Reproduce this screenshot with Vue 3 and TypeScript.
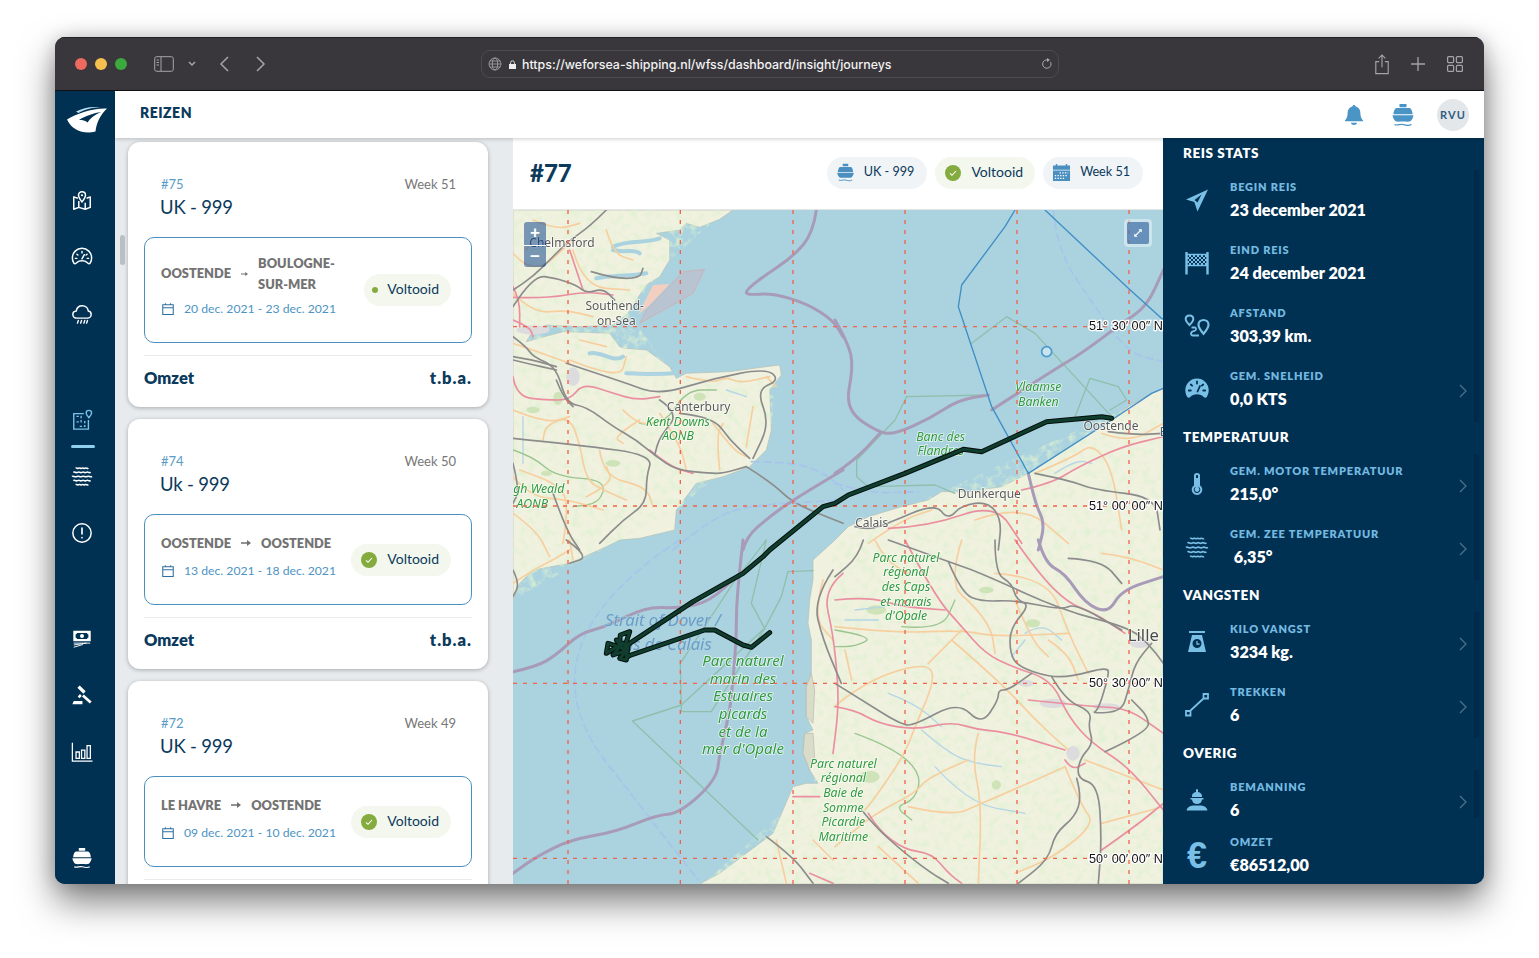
<script setup lang="ts">
interface Trip { id: string; week: string; ship: string; from: string; to: string; dates: string; dot?: boolean }
interface Row { label: string; value: string; icon: string; chev: boolean; short?: boolean }
interface Group { title?: string; rows: Row[]; cls?: string }

const trips: Trip[] = [
  { id: '#75', week: 'Week 51', ship: 'UK - 999', from: 'OOSTENDE', to: 'BOULOGNE-SUR-MER', dates: '20 dec. 2021 - 23 dec. 2021', dot: true },
  { id: '#74', week: 'Week 50', ship: 'Uk - 999', from: 'OOSTENDE', to: 'OOSTENDE', dates: '13 dec. 2021 - 18 dec. 2021' },
  { id: '#72', week: 'Week 49', ship: 'UK - 999', from: 'LE HAVRE', to: 'OOSTENDE', dates: '09 dec. 2021 - 10 dec. 2021' },
]

const groups: Group[] = [
  { title: 'REIS STATS', rows: [
    { label: 'BEGIN REIS', value: '23 december 2021', icon: 'plane', chev: false },
    { label: 'EIND REIS', value: '24 december 2021', icon: 'flag', chev: false },
    { label: 'AFSTAND', value: '303,39 km.', icon: 'route', chev: false },
    { label: 'GEM. SNELHEID', value: '0,0 KTS', icon: 'gaugefill', chev: true },
  ] },
  { title: 'TEMPERATUUR', rows: [
    { label: 'GEM. MOTOR TEMPERATUUR', value: '215,0°', icon: 'thermo', chev: true },
    { label: 'GEM. ZEE TEMPERATUUR', value: '\u00a06,35°', icon: 'waves', chev: true },
  ] },
  { title: 'VANGSTEN', rows: [
    { label: 'KILO VANGST', value: '3234 kg.', icon: 'scale', chev: true },
    { label: 'TREKKEN', value: '6', icon: 'line', chev: true },
  ] },
  { title: 'OVERIG', cls: 'last', rows: [
    { label: 'BEMANNING', value: '6', icon: 'worker', chev: true, short: true },
  ] },
]

const navGroups: { icon: string; active?: boolean }[][] = [
  [{ icon: 'mapfold' }, { icon: 'gauge' }, { icon: 'cloud' }],
  [{ icon: 'area', active: true }, { icon: 'waves' }, { icon: 'alert' }],
  [{ icon: 'money' }, { icon: 'gavel' }, { icon: 'chart' }],
  [{ icon: 'ship' }],
]

function smooth(s: string): string {
  const p = s.trim().split(/\s+/).map((q) => q.split(',').map(Number))
  let d = `M${p[0][0]} ${p[0][1]}`
  for (let i = 1; i < p.length - 1; i++) {
    const mx = (p[i][0] + p[i + 1][0]) / 2
    const my = (p[i][1] + p[i + 1][1]) / 2
    d += `Q${p[i][0]} ${p[i][1]} ${mx} ${my}`
  }
  const l = p[p.length - 1]
  return d + `L${l[0]} ${l[1]}`
}

const gridX = [165, 502, 840, 1176, 1512, 1848]
const gridY = [350, 888, 1420, 1945]
const coords = [
  { t: '51° 30′ 00″ N', y: 348 }, { t: '51° 00′ 00″ N', y: 888 },
  { t: '50° 30′ 00″ N', y: 1419 }, { t: '50° 00′ 00″ N', y: 1947 },
]

// quadrant offsets follow the crops of the map (3x map pixels)
const Q7 = (s: string) => s.trim().split(/\s+/).map((q) => { const [x, y] = q.split(','); return `${+x},${+y + 990}` }).join(' ')
const Q8 = (s: string) => s.trim().split(/\s+/).map((q) => { const [x, y] = q.split(','); return `${+x + 966},${+y}` }).join(' ')
const Q9 = (s: string) => s.trim().split(/\s+/).map((q) => { const [x, y] = q.split(','); return `${+x + 966},${+y + 990}` }).join(' ')

const orange = [
  '0,600 100,640 170,620 200,700 220,810 270,840 340,870', '170,620 100,640 90,690', '380,630 300,680 330,700',
  '520,500 600,520 640,500 680,520 770,500', '600,640 660,720 700,740', '700,710 720,590', '260,720 270,800 400,830 420,890',
  '620,780 610,680 630,640', '0,800 50,860 170,870 270,900', '150,1000 170,880 130,820 20,780', '0,130 60,200 180,90',
  '200,390 280,410', '170,450 320,510 340,440', '220,860 300,820 280,770', '0,400 60,420 170,460', '180,120 210,230 350,240',
  '0,250 60,310 160,300 240,320', '440,610 500,700 520,780', '760,500 790,530',
  '280,60 300,130 360,150', '60,30 130,60 200,40', '40,120 70,70', '330,600 370,640 420,640', '0,910 70,960 110,1040',
  Q7('0,130 60,90 120,60 170,30'), Q7('170,0 180,60'),
  Q9('0,260 180,280 380,270 480,290 700,280'), Q9('30,330 50,420'), Q9('0,500 30,470 150,400 280,370 300,420 240,560 210,640 130,760 90,810'),
  Q9('380,270 280,370'), Q9('400,660 280,710 240,760 120,820 0,920'), Q9('430,580 410,650 440,790 430,1030'), Q9('440,790 580,730 690,680'),
  Q9('220,800 350,830 440,790'), Q9('750,660 985,750'), Q9('800,850 985,800'), Q9('690,680 740,800 780,850 660,950 540,1000'),
  Q9('350,300 500,430 600,540 700,630'), Q9('480,100 640,110 700,280 760,400'), Q9('130,920 250,1030'), Q9('380,0 340,130 420,200 470,270 480,340'),
  Q9('800,40 880,50 985,90'), Q9('540,180 590,300 640,350'), Q9('640,300 700,340 730,420'), Q9('120,0 150,60 220,100'),
  Q8('600,790 720,740 770,700 830,770 860,960'), Q8('420,930 560,880 700,1000'), Q8('100,1000 200,930 290,900'), Q8('800,670 880,700 985,640'),
  Q7('930,120 900,230 960,300'), Q7('790,900 820,1030'), Q7('900,900 960,960'),
]
const pink = [
  '0,230 20,270 20,350', '0,262 100,265 220,245 300,255', '170,120 190,180 210,240', '0,500 10,560 100,570 170,570 210,520 300,550 370,570 440,560',
  '410,720 470,770 540,790', '0,330 50,350 60,380',
  Q9('0,180 100,170 200,200 330,210'), Q9('210,0 300,170 380,260 450,340 530,380 650,420 700,530 770,610 880,680 985,810'),
  Q9('0,500 60,510 130,550 240,570 350,545 430,570 510,575 690,630'), Q9('580,480 680,490 780,500 880,505 985,580'),
  Q9('690,660 710,690 750,670'), Q9('800,930 900,860 985,790'), Q9('100,820 130,870 210,930 290,940 340,1000 380,1030'),
  Q9('540,0 610,100 700,190 780,220 870,280'),
  Q8('160,955 280,950 480,880 560,1000'), Q8('560,840 650,820 730,770 860,710 985,680'),
  Q7('990,100 930,150 960,280 975,430 975,520 960,640'), Q7('840,770 920,770'), Q7('890,1000 960,1030'),
]
const rivers = [
  Q9('260,570 340,640 420,670 500,680'), Q9('60,210 150,200'), Q9('300,680 400,790 570,820'), Q9('570,280 620,250 680,300'), Q9('30,240 130,240'),
  Q9('160,460 240,490 320,560'), Q9('530,350 570,300'), '30,620 30,760', '350,490 450,495', '640,540 700,560', Q8('660,790 720,750 770,760'),
]
const rails = [
  '280,0 230,50 170,90 120,140 60,200 0,240', '0,290 60,195 130,205 190,225 220,250 270,235 305,270', '235,185 300,205 380,205 390,175',
  '0,380 40,410 60,440 130,470 160,580 220,590 300,650 370,690 430,740 490,780 590,790 630,790 700,770',
  '0,685 200,705 420,735 400,800 400,880 330,930 260,1000', '130,510 150,560 180,590', '160,460 250,490 340,520 440,555 600,505 760,475 800,510 730,540 770,640 720,745',
  '440,570 500,610 440,680 425,735', '500,610 600,620 650,690 710,745', '700,770 780,820 840,880 990,940', '0,440 60,450 130,470', '0,450 40,460 130,480', '0,760 20,840 0,880',
  '120,850 160,960 200,1020', Q7('160,0 230,50 170,70'), Q7('0,90 20,130 0,170'),
  Q9('160,0 340,65 440,100 680,210 880,262 940,310 985,370'), Q9('340,65 380,160 440,185 540,180 680,210 720,190 860,270'),
  Q9('480,0 480,100 530,130 545,180 585,195 525,265 525,340 550,380 640,410 710,410 820,380 820,410 790,510 770,520 860,515 880,450 900,370 950,310'),
  Q9('0,430 80,480 200,555 240,555 370,485 440,555 490,480 490,450 520,450 590,400'),
  Q9('650,410 690,480 770,515 760,560 775,610 735,655 725,715 790,735 800,900 790,1030'), Q9('725,715 740,770 720,830 660,880 640,960 550,1030'),
  Q9('810,635 940,575 940,530 890,480'), Q9('85,0 70,50 0,110'), Q9('80,810 120,860 210,940 290,1000 340,1030'), Q9('700,55 800,60 860,130'),
  Q8('60,950 100,960 160,940 300,880 340,930 380,885 460,875 500,930 490,1020'), Q8('600,790 700,810 780,840 960,860 975,960'), Q8('820,665 900,675 985,670'),
  Q7('960,90 900,180 930,300 985,430'), Q7('760,890 840,950 900,1030'),
]
const greens = [
  Q9('0,270 120,290 60,320 0,320'), Q9('60,580 170,620 260,700 240,780 180,800 230,840'), '0,720 60,740 130,800 280,810 260,880 180,890', '380,640 450,650 520,540 610,540',
  Q9('200,260 320,270 360,180'),
]
const purples = [
  '910,0 900,70 840,140 750,200 700,240 700,255 780,250 880,280 960,330 990,380',
  Q8('0,330 40,400 55,470 30,600 135,670 185,670 285,625 370,570 460,555'), Q8('470,600 640,490 740,430 860,340 935,290 985,180'),
  '690,1020 700,980 770,920 840,870 990,780', Q8('0,790 60,750 135,670'),
  Q7('690,0 680,90 670,200 670,300 655,480 640,560 620,640 610,720 500,820 430,825 310,875 170,900 70,950 0,1000'),
  Q7('0,395 70,380 130,345 200,280 280,260 400,200 500,205 590,185 680,100'),
  Q8('580,790 600,880 630,940 610,1020'), Q9('610,0 630,70 690,100 750,190 820,220 860,150 985,110'),
]
const blueThin = [
  Q8('540,0 510,50 380,225 370,290 470,590 580,790'), Q8('630,0 880,235 985,330'), Q8('580,790 830,630 950,550 985,535'),
]
const seaGreen = [
  Q8('410,400 515,320 600,370 830,620'), Q8('720,620 765,505 850,530 875,570 825,600'), Q8('460,555 215,560 180,630 65,750 65,800 100,830 300,825 360,850'),
  Q7('760,0 715,190 755,265 595,515 505,515 502,370 660,130 760,0'), Q7('825,95 900,92'), Q7('825,95 805,170 755,265 505,495 358,543 735,900'),
]
const blueDash = [
  '715,755 850,755 950,800 990,840', '480,1020 600,920 720,885 990,870', Q7('500,0 10,320 555,1020'),
  Q8('655,0 665,120 780,290 880,430 985,455'), Q8('0,820 100,850 250,845'),
]
const forest = [
  [60, 600, 20, 10], [135, 565, 14, 20], [560, 560, 18, 12], [300, 760, 22, 10], [100, 790, 16, 8],
  [1090, 1200, 30, 14], [1420, 1140, 22, 10], [1560, 1240, 22, 12], [1070, 1700, 30, 18], [1450, 1725, 14, 14],
]
const urban = [[1680, 1630, 20, 22], [1540, 1420, 24, 10], [1620, 1480, 40, 14], [1780, 1490, 40, 10], [1880, 1300, 30, 14], [180, 500, 20, 28], [60, 360, 50, 14]]
const track1 = Q8('830,625 800,620 635,635 440,725 385,718 210,790 40,855 0,880') + ' 930,890 770,1020 ' + Q7('750,50 690,100 540,185 350,310')
const track2 = Q7('340,350 575,270 605,270 690,315 715,322 770,278')
const cluster = Q7('350,310 330,335 350,275 322,285 318,320 285,310 280,340 330,310 300,345 345,330 320,355 340,360 345,320 310,300 345,350')
</script>

<template>
  <div class="stage">
    <svg class="defs" width="0" height="0" aria-hidden="true">
      <defs>
        <pattern id="chk" width="4" height="4" patternUnits="userSpaceOnUse">
          <rect width="2" height="2" fill="#79bfe6" /><rect x="2" y="2" width="2" height="2" fill="#79bfe6" />
        </pattern>
        <filter id="mott" x="0" y="0" width="100%" height="100%">
          <feTurbulence type="fractalNoise" baseFrequency="0.045" numOctaves="3" seed="7" />
          <feColorMatrix values="0 0 0 0 .74  0 0 0 0 .88  0 0 0 0 .64  2.2 0 0 0 -.95" />
          <feComposite in2="SourceAlpha" operator="in" />
        </filter>
        <clipPath id="mapclip"><rect width="1950" height="2022" /></clipPath>
      </defs>
      <symbol id="ship" viewBox="0 0 24 24">
        <path fill="currentColor" d="M8.500 1h7v3.200h-7zM5.500 5h13c1.500 0 2.700 2.300 3.200 6.300H2.300C2.800 7.300 4 5 5.500 5zM1.500 12.300h21c-.4 2.500-1.500 4.500-3 6-2 .8-4.500.3-7.500.3s-5.500.5-7.500-.3c-1.500-1.500-2.600-3.500-3-6z" />
        <path fill="none" stroke="currentColor" stroke-width="1.200" d="M3.500 21.500c3 1.600 5.500-.8 8.500 0s5.500 1.600 8.500 0" />
      </symbol>
      <symbol id="mapfold" viewBox="0 0 24 24">
        <path fill="none" stroke="currentColor" stroke-width="1.600" stroke-linejoin="round" d="M7.500 9 3 7.500V21l5.500-2 7 2 5.500-2V7.500L17 9M8.500 12v7M15.500 14v7" />
        <path fill="none" stroke="currentColor" stroke-width="1.600" d="M12 2c2.300 0 3.800 1.700 3.800 3.700 0 2.300-3.800 7.300-3.800 7.300S8.200 8 8.200 5.700C8.200 3.700 9.700 2 12 2z" />
        <circle cx="12" cy="5.700" r="1.200" fill="currentColor" />
      </symbol>
      <symbol id="gauge" viewBox="0 0 24 24">
        <path fill="none" stroke="currentColor" stroke-width="1.600" stroke-linejoin="round" d="M12 2.500a10.500 10.500 0 0 1 10.500 10.500c0 2-.5 3.800-1.500 5.500-1.200 1.500-2.500.5-3.500-.5-1.200-1.200-3.500-1.800-5.500-1.800s-4.300.6-5.500 1.800c-1 1-2.300 2-3.500.5-1-1.700-1.500-3.500-1.500-5.500A10.500 10.500 0 0 1 12 2.500z" />
        <path stroke="currentColor" stroke-width="1.600" stroke-linecap="round" d="M12 6v1.500M6.500 9l1 .8M4.800 13.500h1.500M17.500 9l-1 .8M19.200 13.500h-1.500M14.500 9.500 12 14" />
      </symbol>
      <symbol id="gaugefill" viewBox="0 0 24 24">
        <path fill="currentColor" d="M12 1.500a11.700 11.700 0 0 1 11.700 11.700c0 2.500-.7 4.800-2 6.800-.8 1-2.200.8-3-.1-1.600-1.800-4-2.700-6.700-2.700s-5.100.9-6.700 2.700c-.8.900-2.200 1.100-3 .1-1.300-2-2-4.300-2-6.800A11.700 11.700 0 0 1 12 1.500z" />
        <path stroke="#003153" stroke-width="1.800" stroke-linecap="round" d="M12 4.500v2M5.800 7.500l1.300 1.200M3.800 13.500h2M18.200 7.500l-1.300 1.200M20.200 13.500h-2M15 9l-2.500 5.500" />
      </symbol>
      <symbol id="cloud" viewBox="0 0 24 24">
        <path fill="none" stroke="currentColor" stroke-width="1.600" stroke-linejoin="round" d="M6.500 16.500c-2.500 0-4.500-1.700-4.500-3.900 0-2.100 1.700-3.600 3.700-3.800C6.300 5.300 9 3 12.300 3c3.700 0 6.300 2.700 6.500 5.800 1.900.3 3.200 1.800 3.200 3.700 0 2.200-1.800 4-4 4z" />
        <path stroke="currentColor" stroke-width="1.500" stroke-linecap="round" d="m8 19-1 3M11.500 19l-1 3M15 19l-1 3M18 19l-1 3" />
      </symbol>
      <symbol id="area" viewBox="0 0 24 24">
        <path fill="none" stroke="currentColor" stroke-width="1.500" d="M14 5H3v17h16V12" />
        <path fill="none" stroke="currentColor" stroke-width="1.500" stroke-dasharray="2.500 2" d="M6 8h5v6H6M15 13v6H9" />
        <path fill="none" stroke="currentColor" stroke-width="1.500" d="M19.500 1.500c1.700 0 3 1.300 3 2.900 0 1.800-3 5.100-3 5.100s-3-3.300-3-5.100c0-1.600 1.300-2.900 3-2.900z" />
      </symbol>
      <symbol id="waves" viewBox="0 0 24 24">
        <path fill="none" stroke="currentColor" stroke-width="1.700" d="M5 3.500c1.500-1 2.200 1 3.500 0s2.200 1 3.500 0 2.200 1 3.500 0 2.200 1 3.500 0M2.500 8c1.700-1.300 2.300 1.300 4.800 0s2.300 1.300 4.700 0 2.300 1.300 4.700 0 2.300 1.300 4.800 0M1 12.500c1.700-1.300 2.800 1.300 5.500 0s2.800 1.300 5.500 0 2.800 1.300 5.500 0 2.800 1.300 5.500 0M2.500 17c1.700-1.300 2.300 1.300 4.800 0s2.300 1.300 4.700 0 2.300 1.300 4.700 0 2.300 1.300 4.800 0M5 21.500c1.500-1 2.200 1 3.500 0s2.200 1 3.500 0 2.200 1 3.500 0 2.200 1 3.500 0" />
      </symbol>
      <symbol id="alert" viewBox="0 0 24 24">
        <circle cx="12" cy="12" r="10" fill="none" stroke="currentColor" stroke-width="1.600" />
        <path stroke="currentColor" stroke-width="1.800" stroke-linecap="round" d="M12 6.500V13M12 17v.3" />
      </symbol>
      <symbol id="money" viewBox="0 0 24 24">
        <path fill="currentColor" fill-rule="evenodd" d="M2.500 3h19v11.500h-19zM6.500 5.500c0 1-.8 1.500-1.500 1.500v3.500c.7 0 1.500.5 1.500 1.500h11c0-1 .8-1.500 1.500-1.500V7c-.7 0-1.500-.5-1.500-1.500z" />
        <circle cx="12" cy="8.800" r="2.200" fill="currentColor" />
        <path stroke="currentColor" stroke-width="1" d="M3 16.500h18M3 18.500 17 16.500M3 21 13 18" />
      </symbol>
      <symbol id="gavel" viewBox="0 0 24 24">
        <path fill="currentColor" d="M9.500 1.500 16 8l-2.500 2.500L7 4zM9.800 11l2 2-2.500 2.500-2-2zM14 11.500l8.500 7.500-2 2.200-8.500-7.700zM3 18.500h9.500V22H1.500z" />
      </symbol>
      <symbol id="chart" viewBox="0 0 24 24">
        <path fill="none" stroke="currentColor" stroke-width="1.400" d="M1.500 2v20h22M5.500 12h3.600v7H5.500zM11.500 10h3.600v9h-3.600zM17.500 5h3.600v14h-3.600z" />
      </symbol>
      <symbol id="plane" viewBox="0 0 24 24">
        <path fill="currentColor" fill-rule="evenodd" d="M23 1.500 1 11.500l8.300 2.500 3.200 9.500zM9.500 12l7-5.500-4 8z" />
      </symbol>
      <symbol id="flag" viewBox="0 0 24 24">
        <path stroke="#79bfe6" stroke-width="2.400" d="M1.500 1v22.500M22.500 1v22.500" />
        <path stroke="#79bfe6" stroke-width="1.700" d="M2 3.500h20M2 14.500h20" />
        <rect x="2" y="4" width="20" height="10" fill="url(#chk)" />
      </symbol>
      <symbol id="route" viewBox="0 0 26 24">
        <path fill="none" stroke="currentColor" stroke-width="2" d="M5.500 1.500c2.200 0 3.800 1.500 3.800 3.500 0 2.300-3.800 6-3.800 6S1.700 7.300 1.700 5c0-2 1.600-3.500 3.800-3.500z" />
        <path fill="none" stroke="currentColor" stroke-width="2.200" d="M19.500 6c3 0 5 2 5 4.800 0 3.200-5 9-5 9s-5-5.800-5-9C14.500 8 16.500 6 19.500 6z" />
        <path fill="none" stroke="currentColor" stroke-width="1.800" d="M7.500 13.500h3.300c1.700 0 1.700 3-.3 3.300-2 .3-3.500 1-3.500 2.800 0 1 .5 1.900 2 1.900h6" />
      </symbol>
      <symbol id="thermo" viewBox="0 0 24 24">
        <path fill="none" stroke="currentColor" stroke-width="2" d="M10 3.500c0-1 .9-1.500 2-1.500s2 .5 2 1.500v10.300a4.300 4.300 0 1 1-4 0z" />
        <path stroke="currentColor" stroke-width="2.600" d="M12 6v10" />
        <circle cx="12" cy="17.500" r="2.400" fill="currentColor" />
      </symbol>
      <symbol id="scale" viewBox="0 0 24 24">
        <path fill="currentColor" fill-rule="evenodd" d="M4 1h16v2H4zM7 5h10l4 17H3zM12 9a4.500 4.500 0 1 0 0 9 4.500 4.500 0 0 0 0-9z" />
        <path stroke="currentColor" stroke-width="1.300" d="M12 11v3h2.500" />
      </symbol>
      <symbol id="line" viewBox="0 0 24 24">
        <path fill="none" stroke="currentColor" stroke-width="1.800" d="M1 18h4.500v4.500H1zM18.500 1H23v4.500h-4.500zM5 18 18.500 5.500" />
      </symbol>
      <symbol id="worker" viewBox="0 0 24 24">
        <path fill="currentColor" d="M12 1l1 .5V4c2.500.5 4 2 4 4v1H7V8c0-2 1.500-3.500 4-4V1.500zM5.500 10h13v1.500H17c-.3 3-2.200 4.500-5 4.500s-4.700-1.500-5-4.500H5.500zM8 17.500h8c3.500.3 6 1.800 6.500 5H1.500c.5-3.200 3-4.700 6.500-5z" />
      </symbol>
      <symbol id="cal" viewBox="0 0 16 16">
        <path fill="none" stroke="currentColor" stroke-width="1.200" d="M2 3.200h12v11H2zM2 6.500h12M5 1.500v2M11 1.500v2" />
      </symbol>
      <symbol id="calfill" viewBox="0 0 20 20">
        <path fill="currentColor" d="M1 2.500h3V1h1.500v1.500h9V1H16v1.500h3V7H1zM1 8h18v11H1z" />
        <path stroke="#fff" stroke-width="1.300" stroke-dasharray="1.400 1.400" d="M8 10.500h9M3 13.300h14M3 16.200h10" />
      </symbol>
      <symbol id="check" viewBox="0 0 16 16">
        <circle cx="8" cy="8" r="8" fill="#84ab3e" />
        <path fill="none" stroke="#fff" stroke-width="1.100" d="m5 8.300 2 2 4-4.300" />
      </symbol>
    </svg>

    <div class="window">
      <header class="chrome">
        <div class="lights"><i class="r"></i><i class="y"></i><i class="g"></i></div>
        <svg class="tb side" viewBox="0 0 20 16"><rect x=".7" y=".7" width="18.600" height="14.600" rx="2" fill="none" stroke="currentColor" /><path stroke="currentColor" d="M7 1v14M2.500 4h2.500M2.500 6.500h2.500M2.500 9h2.500" /></svg>
        <svg class="tb drop" viewBox="0 0 8 6"><path fill="none" stroke="currentColor" stroke-width="1.500" d="m1 1 3 3 3-3" /></svg>
        <svg class="tb back" viewBox="0 0 10 16"><path fill="none" stroke="currentColor" stroke-width="1.500" d="M9 1 2 8l7 7" /></svg>
        <svg class="tb fwd" viewBox="0 0 10 16"><path fill="none" stroke="currentColor" stroke-width="1.500" d="m1 1 7 7-7 7" /></svg>
        <div class="url">
          <svg class="globe" viewBox="0 0 14 14"><g fill="none" stroke="currentColor" stroke-width=".8"><circle cx="7" cy="7" r="6" /><ellipse cx="7" cy="7" rx="2.700" ry="6" /><path d="M1 7h12M2 4h10M2 10h10" /></g></svg>
          <svg class="lock" viewBox="0 0 8 10"><path fill="currentColor" d="M0 4.500h8V10H0z" /><path fill="none" stroke="currentColor" d="M1.800 4.500V3a2.200 2.200 0 0 1 4.400 0v1.500" /></svg>
          <span class="addr">https://weforsea-shipping.nl/wfss/dashboard/insight/journeys</span>
          <svg class="reload" viewBox="0 0 12 12"><path fill="none" stroke="currentColor" d="M9.500 4a4.200 4.200 0 1 1-2.500-2" /><path fill="currentColor" d="M6 0v4l3-2z" /></svg>
        </div>
        <svg class="tb share" viewBox="0 0 16 22"><path fill="none" stroke="currentColor" stroke-width="1.200" d="M5 8H1.500v12.500h13V8H11M8 14V1M4.500 4.500 8 1l3.500 3.500" /></svg>
        <svg class="tb plus" viewBox="0 0 14 14"><path stroke="currentColor" stroke-width="1.300" d="M7 0v14M0 7h14" /></svg>
        <svg class="tb tabs" viewBox="0 0 16 16"><g fill="none" stroke="currentColor" stroke-width="1.200"><rect x=".6" y=".6" width="6" height="6" rx="1" /><rect x="9.400" y=".6" width="6" height="6" rx="1" /><rect x=".6" y="9.400" width="6" height="6" rx="1" /><rect x="9.400" y="9.400" width="6" height="6" rx="1" /></g></svg>
      </header>

      <div class="app">
        <nav class="nav">
          <div class="logo">
            <svg viewBox="0 0 40 28" width="40" height="28">
              <path fill="#fff" d="M0 14.500C9 9 25 3 40 3.500 33 10 29.500 18 28.500 26.500 18 29.500 5 26 0 14.500z" />
              <path fill="#003153" d="M12 15C18 11 27 8 34 7 27.500 10 23 13 20.500 17.500 18.500 15.500 15.500 15 12 15z" />
              <path fill="#bfe0f0" d="M9 6.500C16 3 25 1 33 2.500 25 2.500 17 4.500 11.500 8z" />
            </svg>
          </div>
          <div v-for="(g, gi) in navGroups" :key="gi" class="nav-group">
            <div v-for="it in g" :key="it.icon" class="nav-item" :class="{ active: it.active }">
              <svg class="nav-ic"><use :href="'#' + it.icon" /></svg>
            </div>
          </div>
        </nav>

        <div class="main">
          <div class="topbar">
            <h1>REIZEN</h1>
            <svg class="top-ic" viewBox="0 0 22 24"><path fill="currentColor" d="M11 1c1 0 1.700.7 1.800 1.700C16 3.500 18 6 18 9.500c0 4 1 6.500 3 8.500v1H1v-1c2-2 3-4.500 3-8.500 0-3.500 2-6 5.200-6.800C9.300 1.700 10 1 11 1zM7.500 20.500h7c-.6 1.600-2 2.500-3.500 2.500s-2.900-.9-3.500-2.500z" /></svg>
            <svg class="top-ic ship"><use href="#ship" /></svg>
            <div class="avatar">RVU</div>
          </div>
          <div class="content">
            <section class="list">
              <div class="thumb"></div>
              <article v-for="t in trips" :key="t.id" class="card">
                <div class="card-top"><span class="num">{{ t.id }}</span><span class="week">{{ t.week }}</span></div>
                <div class="title">{{ t.ship }}</div>
                <div class="route-box">
                  <div class="route-left">
                    <div class="route">
                      <span class="port">{{ t.from }}</span>
                      <svg class="arrow" viewBox="0 0 10 8"><path fill="currentColor" d="M0 3.200h6V1l4 3-4 3V4.800H0z" /></svg>
                      <span class="port to">{{ t.to }}</span>
                    </div>
                    <div class="dates"><svg class="cal"><use href="#cal" /></svg><span>{{ t.dates }}</span></div>
                  </div>
                  <div class="badge" :class="{ dotted: t.dot }">
                    <i v-if="t.dot" class="dot"></i>
                    <svg v-else class="chk"><use href="#check" /></svg>
                    <span>Voltooid</span>
                  </div>
                </div>
                <div class="card-foot"><b>Omzet</b><b class="tba">t.b.a.</b></div>
              </article>
            </section>

            <section class="center">
              <div class="map-head">
                <h2>#77</h2>
                <div class="chips">
                  <div class="chip"><svg class="chip-ic"><use href="#ship" /></svg><span>UK - 999</span></div>
                  <div class="chip ok"><svg class="chip-ic small"><use href="#check" /></svg><span>Voltooid</span></div>
                  <div class="chip"><svg class="chip-ic"><use href="#calfill" /></svg><span>Week 51</span></div>
                </div>
              </div>
              <div class="map">
                <svg class="map-svg" viewBox="0 0 1950 2022" preserveAspectRatio="none">
                  <g clip-path="url(#mapclip)">
                    <rect width="1950" height="2022" fill="#aad3df" />
                    <path class="land" d="M0 0H660L620 28 560 52 520 40 500 60 430 70 470 90 470 150 440 200 400 225 370 270 345 310 300 345 200 350 100 345 60 360 40 395 150 365 290 370 320 410 335 415 400 420 470 470 490 505 520 490 650 485 760 470 800 465 805 495 770 540 775 660 760 720 710 770 630 800 550 820 490 900 485 960 380 985 320 990 280 1010 170 1060 60 1080 20 1120 0 1170Z" />
                    <path class="land" d="M1950 535 1916 550 1846 590 1796 630 1686 700 1546 790 1466 830 1366 845 1286 845 1246 870 1166 890 1066 920 1006 950 966 990 900 1050 900 1110 890 1170 885 1240 895 1290 895 1390 880 1430 880 1520 900 1560 875 1570 870 1630 890 1680 915 1720 880 1720 840 1730 780 1870 700 1930 620 1990 560 2022H1950Z" />
                    <g filter="url(#mott)"><path d="M0 0H640L470 150 345 310 490 505 790 490 775 660 490 900 320 990 0 1170Z M1950 545 966 990 895 1430 905 1720 570 2022H1950Z" /></g>
                    <ellipse v-for="(f, i) in forest" :key="'f' + i" :cx="f[0]" :cy="f[1]" :rx="f[2]" :ry="f[3]" fill="#cfe3b8" />
                    <ellipse v-for="(f, i) in urban" :key="'u' + i" :cx="f[0]" :cy="f[1]" :rx="f[2]" :ry="f[3]" fill="#dcdcdf" />
                    <path class="inlet" d="M300 110C340 90 400 100 440 85M250 205C300 195 350 200 400 190M230 430C260 420 300 460 330 440M340 490C380 490 420 495 480 490M300 120C340 130 360 115 380 130" />
                    <path d="M575 178 510 185 400 300 380 340 470 290 540 250z" fill="#c2b8c4" fill-opacity=".55" stroke="#d7a8a8" stroke-width="2" />
                    <path d="M470 222 420 225 375 315 410 285z" fill="#f2cfc0" />
                    <path d="M895 1390 880 1430 880 1520 900 1540 905 1440z M875 1570 870 1630 890 1680 905 1640 900 1570z" fill="#d8dcc8" stroke="#b8b8b0" stroke-width="2" />

                    <path v-for="(r, i) in rivers" :key="'ri' + i" :d="smooth(r)" class="ln" stroke="#b4d6e6" stroke-width="4" />
                    <path v-for="(r, i) in greens" :key="'g' + i" :d="smooth(r)" class="ln" stroke="#9ac58e" stroke-width="4" />
                    <path v-for="(r, i) in orange" :key="'o' + i" :d="smooth(r)" class="ln" stroke="#f7cf9e" stroke-width="5" />
                    <path v-for="(r, i) in pink" :key="'p' + i" :d="smooth(r)" class="ln" stroke="#ea8f9f" stroke-width="5" />
                    <path v-for="(r, i) in rails" :key="'r' + i" :d="smooth(r)" class="ln" stroke="#8c8c8c" stroke-width="5" />
                    <path v-for="(r, i) in seaGreen" :key="'sg' + i" :d="'M' + r.replace(/ /g, 'L')" class="ln" stroke="#8fbfac" stroke-width="4" />
                    <path v-for="(r, i) in blueDash" :key="'bd' + i" :d="smooth(r)" class="ln" stroke="#a7c4ea" stroke-width="5" stroke-dasharray="22 14" />
                    <path v-for="(r, i) in purples" :key="'pu' + i" :d="smooth(r)" class="ln" stroke="#a79bb8" stroke-width="9" />
                    <path v-for="(r, i) in blueThin" :key="'bt' + i" :d="'M' + r.replace(/ /g, 'L')" class="ln" stroke="#3f8ec6" stroke-width="4" />
                    <circle cx="1601" cy="425" r="15" fill="#c9e4ee" stroke="#4a9ad0" stroke-width="5" />

                    <g class="lbl grey">
                      <text x="147" y="110">Chelmsford</text><text x="305" y="300">Southend-</text><text x="310" y="346">on-Sea</text>
                      <text x="557" y="602">Canterbury</text><text x="1794" y="660">Oostende</text><text x="1429" y="865">Dunkerque</text>
                      <text x="1076" y="952">Calais</text><text x="1891" y="1292" class="big">Lille</text>
                      <text x="1952" y="677">B</text>
                    </g>
                    <g class="lbl park">
                      <text x="495" y="648">Kent Downs</text><text x="495" y="691">AONB</text><text x="60" y="849">High Weald</text><text x="58" y="893">AONB</text>
                      <text x="1576" y="544">Vlaamse</text><text x="1576" y="587">Banken</text><text x="1283" y="692">Banc des</text><text x="1283" y="734">Flandres</text>
                      <text x="1179" y="1056">Parc naturel</text><text x="1179" y="1099">régional</text><text x="1179" y="1144">des Caps</text><text x="1179" y="1188">et marais</text><text x="1179" y="1231">d'Opale</text>
                      <text x="991" y="1673">Parc naturel</text><text x="991" y="1717">régional</text><text x="991" y="1761">Baie de</text><text x="991" y="1805">Somme</text><text x="991" y="1849">Picardie</text><text x="991" y="1893">Maritime</text>
                    </g>
                    <g class="lbl park wide">
                      <text x="690" y="1367">Parc naturel</text><text x="690" y="1421">marin des</text><text x="690" y="1474">Estuaires</text><text x="690" y="1527">picards</text><text x="690" y="1580">et de la</text><text x="690" y="1632">mer d'Opale</text>
                    </g>
                    <g class="lbl strait"><text x="450" y="1249">Strait of Dover /</text><text x="450" y="1319">Pas de Calais</text></g>

                    <line v-for="x in gridX" :key="'gx' + x" :x1="x" :x2="x" y1="0" y2="2022" class="grat" />
                    <line v-for="y in gridY" :key="'gy' + y" :y1="y" :y2="y" x1="0" x2="1950" class="grat" />
                    <text v-for="c in coords" :key="c.y" x="1728" :y="c.y + 12" class="coord">{{ c.t }}</text>

                    <g class="trk-o">
                      <polyline :points="track1" /><polyline :points="track2" /><polyline :points="cluster" />
                    </g>
                    <g class="trk-i">
                      <polyline :points="track1" /><polyline :points="track2" /><polyline :points="cluster" />
                    </g>
                  </g>
                </svg>
                <div class="zoomer"><button>+</button><button>−</button></div>
                <div class="expand"><button><svg viewBox="0 0 12 12" width="10" height="10"><path stroke="#fff" stroke-width="1.500" d="M2.500 9.500l7-7" /><path fill="#fff" d="M6.500 1.500h4v4zM1.500 6.500v4h4z" /></svg></button></div>
              </div>
            </section>

            <aside class="stats">
              <div v-for="g in groups" :key="g.title" class="stat-group" :class="g.cls">
                <h3>{{ g.title }}</h3>
                <div class="rows">
                  <div v-for="r in g.rows" :key="r.label" class="row" :class="{ short: r.short }">
                    <svg class="row-ic"><use :href="'#' + r.icon" /></svg>
                    <div class="row-text"><div class="row-label">{{ r.label }}</div><div class="row-val">{{ r.value }}</div></div>
                    <svg v-if="r.chev" class="chev" viewBox="0 0 8 14"><path fill="none" stroke="currentColor" stroke-width="1.300" d="m1 1 6 6-6 6" /></svg>
                  </div>
                </div>
              </div>
              <div class="row">
                <span class="euro">€</span>
                <div class="row-text"><div class="row-label">OMZET</div><div class="row-val">€86512,00</div></div>
              </div>
            </aside>
          </div>
        </div>
      </div>
    </div>
  </div>
</template>

<style>
html, body { margin: 0; background: #fff; }
</style>

<style scoped>
* { box-sizing: border-box; }
.stage { width: 1539px; height: 958px; padding: 37px 55px 74px; overflow: hidden; font-family: Lato, "Noto Sans", sans-serif; }
.defs { position: absolute; }
.window { height: 847px; border-radius: 10px; overflow: hidden; display: flex; flex-direction: column; box-shadow: 0 18px 36px rgba(0,0,0,.5), 0 0 18px rgba(0,0,0,.18); background: #003153; }

.chrome { height: 54px; flex: none; background: #39373c; color: #a5a4a7; display: flex; align-items: center; border-bottom: 1px solid #111; border-top: 1px solid #222; }
.lights { display: flex; gap: 8px; margin-left: 20px; }
.lights i { width: 12px; height: 12px; border-radius: 50%; display: block; }
.lights .r { background: #ed6a5e; } .lights .y { background: #f5bf4f; } .lights .g { background: #3ba93b; }
.tb { flex: none; }
.side { width: 20px; height: 16px; margin-left: 27px; }
.drop { width: 8px; height: 6px; margin-left: 14px; }
.back { width: 10px; height: 16px; margin-left: 23px; }
.fwd { width: 10px; height: 16px; margin-left: 27px; }
.url { width: 578px; height: 28px; margin-left: 215px; border: 1px solid #4e4c51; border-radius: 9px; display: flex; align-items: center; padding: 0 5px 0 6px; color: #aaa; }
.globe { width: 14px; height: 14px; margin-right: 6px; }
.lock { width: 7px; height: 9px; margin-left: 1px; color: #eee; }
.addr { margin-left: 6px; font: 500 12.4px Inter, sans-serif; color: #f2f2f2; flex: 1; white-space: nowrap; }
.reload { width: 12px; height: 12px; }
.share { width: 16px; height: 21px; margin-left: 315px; }
.plus { width: 14px; height: 14px; margin-left: 21px; }
.tabs { width: 16px; height: 16px; margin-left: 22px; }

.app { flex: 1; display: flex; min-height: 0; }
.nav { width: 60px; flex: none; background: #003153; color: #fff; display: flex; flex-direction: column; overflow: hidden; }
.logo { height: 82px; flex: none; display: flex; justify-content: flex-start; padding: 14px 0 0 12px; }
.nav-group { flex: none; margin-bottom: 50px; }
.nav-item { height: 56.3px; display: flex; align-items: center; justify-content: center; position: relative; padding-right: 6px; }
.nav-ic { width: 22px; height: 22px; }
.nav-item.active { color: #78c4e8; }
.nav-item.active::after { content: ""; position: absolute; left: 16px; width: 24px; height: 3px; bottom: 0; background: #8fd0ee; border-radius: 2px; }

.main { flex: 1; min-width: 0; display: flex; flex-direction: column; }
.topbar { height: 47px; flex: none; background: #fff; display: flex; align-items: center; padding: 0 15px 0 25px; box-shadow: 0 1px 4px rgba(0,0,0,.2); position: relative; z-index: 3; color: #4a94c6; }
.topbar h1 { margin: 0 auto 4px 0; font-size: 14px; font-weight: 800; letter-spacing: .5px; color: #0b3a5c; }
.top-ic { width: 20px; height: 22px; margin-right: 27px; }
.top-ic.ship { width: 24px; height: 24px; margin-right: 22px; }
.avatar { width: 32px; height: 32px; border-radius: 50%; background: #e3e7ea; color: #2d5d80; font-size: 11px; font-weight: 700; letter-spacing: 1.2px; display: flex; align-items: center; justify-content: center; }

.content { flex: 1; min-height: 0; display: flex; }
.list { width: 398px; flex: none; background: #e7ebee; padding: 4px 25px 0 13px; overflow: hidden; position: relative; }
.thumb { position: absolute; left: 5px; top: 97px; width: 5px; height: 30px; background: #b9bfc4; border-radius: 3px; }
.card { background: #fff; border-radius: 12px; box-shadow: 0 1px 4px rgba(0,0,0,.28); margin-bottom: 12px; padding: 33px 16px 0; height: 250px; }
.card:first-of-type { height: 265px; }
.card-top { display: flex; justify-content: space-between; padding: 0 16px 0 17px; font-size: 13px; line-height: 18px; }
.num { color: #5b9cc7; }
.week { color: #777; }
.title { padding-left: 16px; font-size: 18.5px; letter-spacing: -.2px; line-height: 24px; margin-top: 2px; color: #0b3a5c; }
.route-box { margin-top: 18px; border: 1px solid #4b90c0; border-radius: 10px; display: flex; align-items: center; padding: 0 20px 0 16px; height: 91px; }
.card:first-of-type .route-box { height: 106px; }
.route-left { flex: 1; min-width: 0; padding-bottom: 6px; }
.card:first-of-type .route-left { padding-bottom: 9px; }
.route { display: flex; align-items: center; }
.port { font-size: 12.8px; font-weight: 800; line-height: 21px; color: #737373; }
.to { width: min-content; flex: none; max-width: 120px; }
.arrow { width: 10px; height: 8px; margin: 0 10px; color: #707070; flex: none; }
.card:first-of-type .arrow { width: 7px; height: 6px; }
.dates { display: flex; align-items: center; font-size: 12.2px; color: #4d94c4; margin-top: 7px; line-height: 20px; white-space: nowrap; }
.card:first-of-type .dates { margin-top: 4px; }
.cal { width: 14px; height: 14px; color: #2e6f9f; margin-right: 9px; flex: none; }
.badge { flex: none; height: 32px; border-radius: 16px; background: #f3f7ee; display: flex; align-items: center; padding: 0 12px 3px 10px; font-size: 14px; color: #0b3a5c; }
.badge.dotted { padding-left: 8px; padding-bottom: 4px; }
.chk { width: 16px; height: 16px; margin-right: 10px; margin-top: 3px; }
.dot { width: 6px; height: 6px; border-radius: 50%; background: #84ab3e; margin: 3px 9px 0 0; }
.card-foot { margin-top: 12px; border-top: 1px solid #e8eaec; padding-top: 11px; display: flex; justify-content: space-between; font-size: 16.5px; line-height: 22px; color: #0b3a5c; }
.card-foot b { font-weight: 800; }
.tba { letter-spacing: 1px; }

.center { width: 650px; flex: none; display: flex; flex-direction: column; background: #fff; }
.map-head { height: 72px; flex: none; display: flex; align-items: center; justify-content: space-between; padding: 0 20px 2px 17px; border-bottom: 1px solid #e4e6e8; }
.map-head h2 { margin: 0; font-size: 24px; font-weight: 900; color: #0b3a5c; }
.chips { display: flex; gap: 8px; }
.chip { height: 32px; border-radius: 16px; background: #f0f4f7; display: flex; align-items: center; padding: 0 13px 2px 9px; font-size: 12.6px; color: #0b3a5c; }
.chip.ok { background: #f3f7ee; padding-right: 12px; font-size: 14px; }
.chip-ic { width: 19px; height: 19px; color: #4a8fc0; margin: 2px 9px 0 0; }
.chip-ic.small { width: 16px; height: 16px; margin: 2px 10px 0 1px; }

.map { flex: 1; min-height: 0; position: relative; overflow: hidden; }
.map-svg { width: 100%; height: 100%; display: block; filter: blur(.3px); }
.land { fill: #f1f1e0; stroke: #b4bfb4; stroke-width: 2; }
.inlet { fill: none; stroke: #aad3df; stroke-width: 12; stroke-linecap: round; }
.ln { fill: none; stroke-linejoin: round; stroke-linecap: round; }
.grat { stroke: #f0654a; stroke-width: 4; stroke-dasharray: 12 18; }
.lbl text { text-anchor: middle; font-family: "Noto Sans", sans-serif; paint-order: stroke; stroke: rgba(255,255,255,.7); stroke-width: 5px; }
.grey text { font-size: 36px; fill: #5a5a5a; }
.grey .big { font-size: 50px; fill: #4a4a4a; }
.park text { font-size: 37px; font-style: italic; fill: #2f9b3e; }
.wide text { font-size: 45px; }
.strait text { font-size: 50px; font-style: italic; fill: #6d9dc8; stroke: rgba(170,211,223,.6); }
.coord { font-family: "Liberation Sans", sans-serif; font-size: 38px; fill: #111; paint-order: stroke; stroke: #fff; stroke-width: 8px; }
.trk-o polyline { fill: none; stroke: #050f0c; stroke-width: 15; stroke-linejoin: round; stroke-linecap: round; }
.trk-i polyline { fill: none; stroke: #0f3d2e; stroke-width: 9; stroke-linejoin: round; stroke-linecap: round; }

.zoomer { position: absolute; left: 11px; top: 12px; width: 22px; border-radius: 3px; overflow: hidden; }
.zoomer button { display: block; width: 22px; height: 22.5px; border: 0; padding: 0; background: rgba(0,60,136,.5); color: #fff; font: 700 17px/22px "Liberation Sans", sans-serif; }
.zoomer button + button { border-top: 1px solid #fff; }
.expand { position: absolute; right: 11px; top: 9px; padding: 3px; background: rgba(255,255,255,.4); border-radius: 4px; display: flex; }
.expand button { width: 22px; height: 22px; border: 0; padding: 0; background: rgba(0,60,136,.5); border-radius: 2px; display: flex; align-items: center; justify-content: center; }

.stats { flex: 1; min-width: 0; background: #003153; color: #fff; padding-top: 3px; overflow: hidden; }
.stat-group { position: relative; }
.stat-group::after { content: ""; position: absolute; right: 5px; width: 5px; top: 29px; bottom: 3px; background: #002a49; }
.stat-group.last::after { bottom: 10px; }
.stat-group h3 { margin: 0 0 8px; padding-left: 20px; height: 24px; line-height: 24px; font-size: 13.5px; font-weight: 800; letter-spacing: .55px; }
.row { height: 63px; display: flex; align-items: flex-start; padding: 6px 0 0 20px; position: relative; }
.row.short { height: 55px; }
.row-ic { width: 28px; height: 24px; color: #79bfe6; margin: 9px 19px 0 0; flex: none; }
.row-text { flex: 1; min-width: 0; }
.row-label { font-size: 11px; line-height: 16px; font-weight: 800; letter-spacing: .8px; color: #74b9e0; }
.row-val { font-size: 16.2px; line-height: 30px; font-weight: 800; }
.chev { position: absolute; right: 17px; top: 22px; width: 8px; height: 14px; color: #4d6f8a; }
.euro { width: 28px; margin: -1px 19px 0 0; font-size: 36px; line-height: 46px; font-weight: 900; color: #79bfe6; font-family: "Liberation Sans", sans-serif; flex: none; text-align: center; }
</style>
